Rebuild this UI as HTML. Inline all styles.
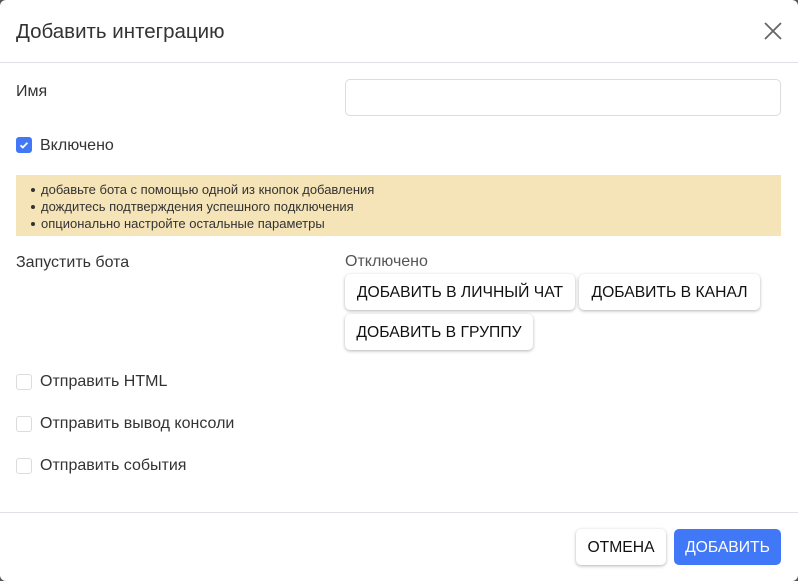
<!DOCTYPE html>
<html><head><meta charset="utf-8"><style>
*{box-sizing:border-box;margin:0;padding:0}
body{width:798px;height:581px;background:#555;font-family:"Liberation Sans",Roboto,sans-serif;color:#333;position:relative;overflow:hidden}
.dlg{position:absolute;left:0;top:0;width:798px;height:581px;background:#fff;border-radius:6px}
.t{position:absolute;left:16px;top:20px;font-size:20.5px;color:#333}
.x{position:absolute;left:764px;top:22px}
.hr{position:absolute;left:0;width:798px;height:1px;background:#dee2e6}
.lbl{position:absolute;font-size:16px;color:#333}
.inp{position:absolute;left:345px;top:79px;width:436px;height:37px;border:1px solid #dcdcdc;border-radius:5px}
.cb{position:absolute;left:16px;width:16px;height:16px;border:1px solid #dcdcdc;border-radius:3px;background:#fff}
.cb.on{background:#4078f8;border-color:#4078f8}
.note{position:absolute;left:16px;top:175px;width:765px;height:61px;background:#f5e4b8;font-size:13px;color:#333;padding:6px 0 0 25px;line-height:17px}
.note div{position:relative}
.note div:before{content:"";position:absolute;left:-10px;top:7px;width:4px;height:4px;border-radius:50%;background:#333}
.b{position:absolute;height:36px;background:#fff;border-radius:5px;box-shadow:0 1px 3px rgba(0,0,0,.3);font-size:15.7px;color:#111;text-align:center;line-height:37px}
.blue{background:#4078f8;color:#fff;box-shadow:none}
</style></head><body><div class="dlg">
<div class="t">Добавить интеграцию</div>
<svg class="x" width="18" height="18" viewBox="0 0 18 18"><path d="M1 1L17 17M17 1L1 17" stroke="#666" stroke-width="1.8"/></svg>
<div class="hr" style="top:62px"></div>
<div class="lbl" style="left:16px;top:83px">Имя</div>
<div class="inp"></div>
<div class="cb on" style="top:137px"><svg width="14" height="14" viewBox="0 0 14 14"><path d="M3.5 7.3l2.3 2.2 4.6-4.8" stroke="#fff" stroke-width="1.8" fill="none"/></svg></div>
<div class="lbl" style="left:40px;top:137px">Включено</div>
<div class="note"><div>добавьте бота с помощью одной из кнопок добавления</div><div>дождитесь подтверждения успешного подключения</div><div>опционально настройте остальные параметры</div></div>
<div class="lbl" style="left:16px;top:254px">Запустить бота</div>
<div class="lbl" style="left:345px;top:253px;color:#555">Отключено</div>
<div class="b" style="left:345px;top:274px;width:230px">ДОБАВИТЬ В ЛИЧНЫЙ ЧАТ</div>
<div class="b" style="left:579px;top:274px;width:181px">ДОБАВИТЬ В КАНАЛ</div>
<div class="b" style="left:345px;top:314px;width:188px">ДОБАВИТЬ В ГРУППУ</div>
<div class="cb" style="top:374px"></div><div class="lbl" style="left:40px;top:373px">Отправить HTML</div>
<div class="cb" style="top:416px"></div><div class="lbl" style="left:40px;top:415px">Отправить вывод консоли</div>
<div class="cb" style="top:458px"></div><div class="lbl" style="left:40px;top:457px">Отправить события</div>
<div class="hr" style="top:512px"></div>
<div class="b" style="left:576px;top:529px;width:90px">ОТМЕНА</div>
<div class="b blue" style="left:674px;top:529px;width:107px">ДОБАВИТЬ</div>
</div></body></html>
